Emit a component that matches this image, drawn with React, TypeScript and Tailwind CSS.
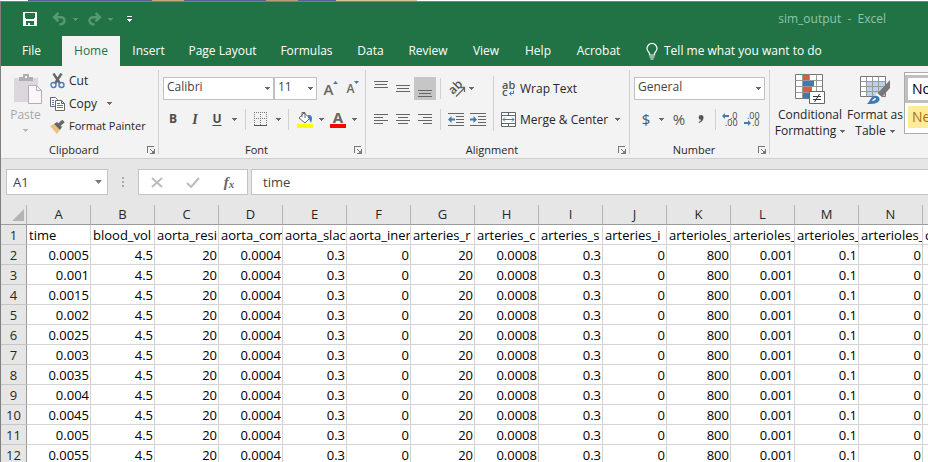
import React from "react";

const UI = "font-['Open_Sans','Noto_Sans',sans-serif]";

function Caret({ className = "text-[#6a6a6a]" }: { className?: string }) {
  return (
    <svg width="5" height="3" viewBox="0 0 5 3" className={`shrink-0 ${className}`} aria-hidden="true" shapeRendering="crispEdges">
      <path d="M0 0h5v1H0zM1 1h3v1H1zM2 2h1v1H2z" fill="currentColor" />
    </svg>
  );
}

function Divider({ className }: { className: string }) {
  return <span className={`w-px shrink-0 bg-[#d0d0d0] ${className}`} />;
}

function IconButton({ label, className, children }: { label: string; className: string; children: React.ReactNode }) {
  return (
    <button type="button" aria-label={label} className={`flex shrink-0 items-center justify-center ${className}`}>
      {children}
    </button>
  );
}

function CaretButton({ label, className = "w-4" }: { label: string; className?: string }) {
  return (
    <IconButton label={label} className={`h-[22px] ${className}`}>
      <Caret />
    </IconButton>
  );
}

function Group({ title, className, launcher = true, children }: { title: string; className: string; launcher?: boolean; children: React.ReactNode }) {
  return (
    <section aria-label={title} className={`flex shrink-0 flex-col ${className}`}>
      <div className="h-[75px]">{children}</div>
      <div className="flex h-[17px] items-center pr-[3px]">
        <h2 className="flex-1 text-center text-[11px] leading-4 text-[#262626]">{title}</h2>
        {launcher && (
          <button type="button" aria-label={`${title} settings`} className="flex size-2 items-center">
            <svg width="8" height="8" viewBox="0 0 8 8" shapeRendering="crispEdges" aria-hidden="true">
              <path d="M0 0h7v1H1v6H0zM3 3h1v1H3zM4 4h1v1H4zM5 5h1v1H5zM7 3h1v5H3V7h4zM5 6h2v1H5zM6 5h1v2H6z" fill="#777" />
            </svg>
          </button>
        )}
      </div>
    </section>
  );
}

function SelectBox({ label, value, options, className }: { label: string; value: string; options: string[]; className: string }) {
  return (
    <div className={`relative h-[23px] shrink-0 ${className}`}>
      <select aria-label={label} defaultValue={value} className="block size-full appearance-none border border-[#c0c0c0] bg-white pb-[3px] pl-[3px] text-[12px] leading-[18px] text-[#444]">
        {options.map((o) => (
          <option key={o}>{o}</option>
        ))}
      </select>
      <span className="pointer-events-none absolute inset-y-0 right-1 flex items-center">
        <Caret />
      </span>
    </div>
  );
}

const tabs: [string, string][] = [
  ["File", "w-[61px]"],
  ["Home", "w-[58px]"],
  ["Insert", "w-[57px]"],
  ["Page Layout", "w-[91px]"],
  ["Formulas", "w-[77px]"],
  ["Data", "w-[51px]"],
  ["Review", "w-[64px]"],
  ["View", "w-[52px]"],
  ["Help", "w-[52px]"],
  ["Acrobat", "w-[69px]"],
];

function TitleBar() {
  return (
    <header className="flex h-[34px] items-center pl-[22px]">
      <IconButton label="Save" className="size-[14px]">
        <svg width="14" height="14" viewBox="0 0 14 14" shapeRendering="crispEdges">
          <path fillRule="evenodd" d="M0 0h14v14H0zM2 1v5h1v1h8v-1h1V1zM3 9v4h2v-2h2v2h4V9z" fill="#fff" />
        </svg>
      </IconButton>
      <IconButton label="Undo" className="ml-[14px] w-4">
        <svg width="15" height="14" viewBox="0 0 15 14" fill="none" stroke="#559a74" strokeWidth="2.4">
          <path d="M6.500 1 2 5.200l4.500 4.200M2 5.200h6.500c5.500 0 5.500 6.500-1 7.300" />
        </svg>
      </IconButton>
      <IconButton label="Undo history" className="w-4">
        <Caret className="text-[#559a74]" />
      </IconButton>
      <IconButton label="Redo" className="ml-[3px] w-4">
        <svg width="15" height="14" viewBox="0 0 15 14" fill="none" stroke="#559a74" strokeWidth="2.4">
          <path d="m8.500 1 4.500 4.200-4.500 4.200M13 5.200H6.500C1 5.200 1 11.700 7.500 12.500" />
        </svg>
      </IconButton>
      <IconButton label="Redo history" className="w-4">
        <Caret className="text-[#559a74]" />
      </IconButton>
      <IconButton label="Customize Quick Access Toolbar" className="ml-[3px] w-4">
        <svg width="5" height="6" viewBox="0 0 5 6" shapeRendering="crispEdges">
          <path d="M0 0h5v1H0zM0 3h5v1H0zM1 4h3v1H1zM2 5h1v1H2z" fill="#fff" />
        </svg>
      </IconButton>
      <h1 className="mr-[42px] ml-auto text-[12px] whitespace-pre text-[#90c5a8]">sim_output  -  Excel</h1>
    </header>
  );
}

function TabBar() {
  return (
    <nav className="flex h-[30px] text-[12px] text-white">
      {tabs.map(([name, width]) => (
        <button key={name} type="button" className={`shrink-0 text-center ${width} ${name === "Home" ? "bg-[#f3f3f3] text-[#217346]" : ""}`}>
          {name}
        </button>
      ))}
      <button type="button" className="ml-[13px] flex shrink-0 items-center gap-[6px] whitespace-nowrap">
        <svg width="12" height="17" viewBox="0 0 12 17" fill="none" stroke="#fff" strokeWidth="1.2">
          <path d="M3.5 12V10.5C3 9 1 8 1 5.5a5 5 0 0 1 10 0C11 8 9 9 8.500 10.500V12zM3.500 14h5M4.500 16h3" />
        </svg>
        Tell me what you want to do
      </button>
    </nav>
  );
}

function ClipboardGroup() {
  return (
    <Group title="Clipboard" className="w-[157px]">
      <div className="flex pt-[3px]">
        <button type="button" className="flex w-[49px] shrink-0 flex-col items-center pt-[5px] text-[12px] leading-5 text-[#a8a8a8]">
          <svg width="28" height="31" viewBox="0 0 28 31" className="ml-1">
            <path d="M0 4h24v24H0z" fill="#dcd7dc" />
            <path d="M5 3h4V0h6v3h4v4H5z" fill="#b1adb1" />
            <path d="M11 2h2v2h-2z" fill="#f3f3f3" />
            <path d="M14.500 11.500h8l5 5v13h-13z" fill="#faf7fa" stroke="#b1adb1" />
            <path d="M22.500 11.500v5h5" fill="none" stroke="#b1adb1" />
          </svg>
          Paste
          <Caret className="mt-1 text-[#b9b5b9]" />
        </button>
        <div className="flex flex-col text-[12px] text-[#262626]">
          <button type="button" className="flex h-[23px] items-center gap-1">
            <svg width="15" height="16" viewBox="0 0 15 16" fill="none">
              <path d="M3.500 0.500 10 10.500M11.500 0.500 5 10.500" stroke="#666" strokeWidth="2.400" />
              <circle cx="3.500" cy="12" r="2.500" stroke="#4a80b8" strokeWidth="1.400" />
              <circle cx="11.500" cy="12" r="2.500" stroke="#4a80b8" strokeWidth="1.400" />
            </svg>
            Cut
          </button>
          <div className="flex h-[23px] items-center">
            <button type="button" className="flex items-center gap-1">
              <svg width="15" height="14" viewBox="0 0 15 14">
                <path d="M.5.5h5l2 2v7h-7z" fill="#fff" stroke="#666" />
                <path d="M5.500 3.500h6l3 3v7h-9z" fill="#fff" stroke="#666" />
                <path d="M11.500 3.500v3h3" fill="none" stroke="#666" />
                <path d="M2 3.500h2M2 5.500h2M2 7.500h2M7 6.500h3M7 8.500h6M7 10.500h6" stroke="#4a80b8" />
              </svg>
              Copy
            </button>
            <CaretButton label="Copy options" className="ml-1 w-4" />
          </div>
          <button type="button" className="flex h-[23px] items-center gap-1 text-[11px] whitespace-nowrap">
            <svg width="15" height="14" viewBox="0 0 15 14">
              <path d="M0 6l4-2 6 6-3 4z" fill="#eec27e" />
              <path d="M4 4l3-2 5 5-2 3z" fill="#666" />
              <path d="m9 5 4.500-4" stroke="#666" strokeWidth="3.500" />
            </svg>
            Format Painter
          </button>
        </div>
      </div>
    </Group>
  );
}

function FontGroup() {
  return (
    <Group title="Font" className="w-[206px]">
      <div className="flex items-center pt-[11px] pl-1">
        <SelectBox label="Font" value="Calibri" options={["Calibri", "Arial", "Cambria"]} className="w-[111px]" />
        <SelectBox label="Font size" value="11" options={["10", "11", "12", "14"]} className="w-[43px]" />
        <IconButton label="Increase font size" className="ml-[5px] h-[23px] w-[18px] font-semibold text-[#666]">
          <span className="text-[15px] leading-5">A</span>
          <svg width="5" height="3" viewBox="0 0 5 3" className="mb-[13px]"><path d="M0 3 2.500 0 5 3z" fill="#3f7ab5" /></svg>
        </IconButton>
        <IconButton label="Decrease font size" className="ml-[5px] h-[23px] w-[16px] font-semibold text-[#666]">
          <span className="text-[12px] leading-5">A</span>
          <svg width="5" height="3" viewBox="0 0 5 3" className="mb-[13px]"><path d="M0 0 2.500 3 5 0z" fill="#3f7ab5" /></svg>
        </IconButton>
      </div>
      <div className="flex items-center pt-2 pl-[3px] text-[12px] text-[#4c4c4c]">
        <IconButton label="Bold" className="h-[22px] w-[22px] font-bold">B</IconButton>
        <IconButton label="Italic" className="h-[22px] w-[22px] font-['Liberation_Serif',serif] text-[14px] font-bold italic">I</IconButton>
        <IconButton label="Underline" className="h-[22px] w-[22px] font-bold underline underline-offset-2">U</IconButton>
        <CaretButton label="Underline options" className="w-[13px]" />
        <Divider className="mx-[4px] h-[21px]" />
        <IconButton label="Borders" className="h-[22px] w-[20px]">
          <svg width="13" height="14" viewBox="0 0 13 14" shapeRendering="crispEdges" stroke="#777" fill="none">
            <path d="M0 .5h13M0 6.500h13M.5 0v13M6.500 0v13M12.500 0v13" strokeDasharray="1 1" />
            <path d="M0 13.500h13" stroke="#555" />
          </svg>
        </IconButton>
        <CaretButton label="Border options" className="w-[16px]" />
        <Divider className="mr-[7px] ml-[2px] h-[21px]" />
        <IconButton label="Fill color" className="h-[22px] w-[17px]">
          <svg width="16" height="17" viewBox="0 0 16 17">
            <path d="M2 7 7 2l6 5-5 5z" fill="#fff" stroke="#666" />
            <path d="M5 6V1.500h3V7" fill="none" stroke="#666" />
            <path d="M11 4c4-.5 5 3 3 8-1-1-1-4-3-5z" fill="#3f7ab5" />
            <path d="M0 13h16v4H0z" fill="#ff0" />
          </svg>
        </IconButton>
        <CaretButton label="Fill color options" />
        <IconButton label="Font color" className="h-[22px] w-[18px]">
          <span className="flex flex-col items-center border-b-4 border-[#f00] px-[3px] text-[15px] leading-[13px] font-bold text-[#666]">A</span>
        </IconButton>
        <CaretButton label="Font color options" className="w-[15px]" />
      </div>
    </Group>
  );
}

function Lines({ rows, label, active }: { rows: [number, number, number][]; label: string; active?: boolean }) {
  return (
    <IconButton label={label} className={`h-[23px] w-[22px] ${active ? "bg-[#c6c6c6]" : ""}`}>
      <svg width="14" height="18" viewBox="0 0 14 18" shapeRendering="crispEdges">
        {rows.map(([x, y, w]) => (
          <rect key={y} x={x} y={y} width={w} height="1" fill="#666" />
        ))}
      </svg>
    </IconButton>
  );
}

function IndentIcon({ flip }: { flip?: boolean }) {
  return (
    <svg width="16" height="13" viewBox="0 0 16 13">
      <path d="M0 .5h16M8 3.500h8M8 6.500h8M8 9.500h8M0 12.500h16" stroke="#666" />
      <path d={flip ? "M7 6.500 3.500 3v2.500H0v2h3.500V10z" : "M0 6.500 3.500 3v2.500H7v2H3.500V10z"} fill="#3f7ab5" />
    </svg>
  );
}

function AlignmentGroup() {
  return (
    <Group title="Alignment" className="w-[263px]">
      <div className="flex pt-[10px] pl-1">
        <div className="flex w-[123px] flex-col gap-2">
          <div className="flex items-center pt-px">
            <Lines label="Top align" rows={[[0, 1, 14], [1, 4, 12], [0, 7, 14]]} />
            <Lines label="Middle align" rows={[[0, 5, 14], [1, 8, 12], [0, 11, 14]]} />
            <Lines label="Bottom align" active rows={[[0, 10, 14], [1, 13, 12], [0, 16, 14]]} />
            <Divider className="mr-[6px] ml-1 h-[21px]" />
            <IconButton label="Orientation" className="h-[23px] w-[18px]">
              <svg width="17" height="16" viewBox="0 0 17 16" className="overflow-visible">
                <text transform="translate(5 14) rotate(-45)" fontSize="12" fontWeight="600" fill="#555">ab</text>
                <path d="M8 15.500 16 7.500M12 6.500h4.500V11" stroke="#666" strokeWidth="1.300" fill="none" />
              </svg>
            </IconButton>
            <CaretButton label="Orientation options" className="w-[12px]" />
          </div>
          <div className="flex items-center">
            <Lines label="Align left" rows={[[0, 3, 14], [0, 6, 9], [0, 9, 14], [0, 12, 9]]} />
            <Lines label="Center" rows={[[0, 3, 14], [2, 6, 10], [0, 9, 14], [2, 12, 10]]} />
            <Lines label="Align right" rows={[[0, 3, 14], [5, 6, 9], [0, 9, 14], [5, 12, 9]]} />
            <Divider className="mr-[6px] ml-1 h-[21px]" />
            <IconButton label="Decrease indent" className="h-[22px] w-[18px]">
              <IndentIcon />
            </IconButton>
            <IconButton label="Increase indent" className="ml-1 h-[22px] w-[18px]">
              <IndentIcon flip />
            </IconButton>
          </div>
        </div>
        <Divider className="h-[55px]" />
        <div className="flex flex-col gap-[6px] pl-[7px] text-[12px] text-[#262626]">
          <button type="button" className="flex h-[26px] items-center gap-1 whitespace-nowrap">
            <svg width="15" height="17" viewBox="0 0 15 17" className="overflow-visible">
              <text x="1" y="8" fontSize="11" fontWeight="600" fill="#555">ab</text>
              <text x="1" y="15" fontSize="11" fontWeight="600" fill="#555">c</text>
              <path d="M12.500 9.500v3H8.500M10.500 10.500l-2 2 2 2" stroke="#3f7ab5" fill="none" />
            </svg>
            Wrap Text
          </button>
          <div className="flex h-[23px] items-center">
            <button type="button" className="flex items-center gap-1 whitespace-nowrap">
              <svg width="15" height="15" viewBox="0 0 15 15">
                <path d="M.5.5h14v14H.5zM.5 3.500h14M.5 11.500h14M7.500.5v3M7.500 11.500v3" fill="#fff" stroke="#666" />
                <path d="M2 7.500h11M4 5.500l-2 2 2 2M11 5.500l2 2-2 2" stroke="#3f7ab5" fill="none" />
              </svg>
              Merge &amp; Center
            </button>
            <CaretButton label="Merge options" className="ml-px w-4" />
          </div>
        </div>
      </div>
    </Group>
  );
}

function DecimalIcon({ increase }: { increase?: boolean }) {
  return (
    <svg width="16" height="15" viewBox="0 0 16 15" fontSize="9" fill="#444" className="overflow-visible">
      <text x={increase ? 8 : 3} y="7">{increase ? ".0" : ".00"}</text>
      <text x={increase ? 3 : 8} y="14">{increase ? ".00" : ".0"}</text>
      {increase ? (
        <path d="M0 4 3 1v2h4v2H3v2z" fill="#3f7ab5" />
      ) : (
        <path d="M7 11 4 8v2H0v2h4v2z" fill="#3f7ab5" />
      )}
    </svg>
  );
}

function NumberGroup() {
  return (
    <Group title="Number" className="w-[139px]">
      <div className="pt-[11px] pl-1">
        <SelectBox label="Number format" value="General" options={["General", "Number", "Currency"]} className="w-[131px]" />
      </div>
      <div className="flex items-center pt-2 pl-[6px] text-[15px] text-[#555]">
        <IconButton label="Accounting format" className="h-[22px] w-5">$</IconButton>
        <CaretButton label="Accounting options" className="w-[11px]" />
        <IconButton label="Percent style" className="h-[22px] w-6">%</IconButton>
        <IconButton label="Comma style" className="h-[22px] w-5">
          <svg width="6" height="8" viewBox="0 0 6 8">
            <path d="M3 0a2.500 2.500 0 0 1 2.500 2.500C5.500 5 4 7 1 8L.5 7C2 6.500 3 5.500 3 4.800A2.400 2.400 0 1 1 3 0z" fill="#555" />
          </svg>
        </IconButton>
        <Divider className="mx-[4px] h-[21px]" />
        <IconButton label="Increase decimal" className="h-[22px] w-5"><DecimalIcon increase /></IconButton>
        <IconButton label="Decrease decimal" className="ml-[2px] h-[22px] w-5"><DecimalIcon /></IconButton>
      </div>
    </Group>
  );
}

function StylesGroup() {
  return (
    <section aria-label="Styles" className="flex min-w-0 flex-1 overflow-hidden text-[12px] leading-4 text-[#262626]">
      <button type="button" className="flex w-[80px] shrink-0 flex-col items-center pt-2">
        <svg width="30" height="31" viewBox="0 0 30 31">
          <path d="M.5.5h27v24H.5z" fill="#fff" stroke="#777" />
          <path d="M.5 6.500h27M.5 12.500h27M.5 18.500h27M7.500.5v24M14.500.5v24M21.500.5v24" stroke="#999" />
          <path d="M8 1h6v5H8zM8 13h9v5H8z" fill="#d65f41" />
          <path d="M8 7h11v5H8zM8 19h6v5H8z" fill="#3f7ab5" />
          <path d="M14.500 17.500h15v12h-15z" fill="#fff" stroke="#666" />
          <path d="M18 22.500h8M18 25.500h8M24.500 20l-5 8" stroke="#333" fill="none" />
        </svg>
        <span className="mt-[2px]">Conditional</span>
        <span className="flex items-center gap-1">Formatting <Caret /></span>
      </button>
      <button type="button" className="flex w-[50px] shrink-0 flex-col items-center pt-2 whitespace-nowrap">
        <svg width="30" height="31" viewBox="0 0 30 31">
          <path d="M.5 2.500h25v20H.5z" fill="#fff" stroke="#777" />
          <path d="M7 8h18v14H7z" fill="#bdd2ea" />
          <path d="M.5 7.500h25M.5 12.500h25M.5 17.500h25M6.500 2.500v20M12.500 2.500v20M18.500 2.500v20" stroke="#999" />
          <path d="M30 6v8l-9 10-4-4z" fill="#777" />
          <path d="m17 19 5 4-3 3-4-4z" fill="#fff" />
          <path d="M14 22c4-1 7 2 5 5-2 3-7 3-12 3 3-2 3-7 7-8z" fill="#3f7ab5" />
          <path d="M16 24c-2 0-3 1-4 3 2 0 4-1 4-3z" fill="#fff" />
        </svg>
        <span className="mt-[2px]">Format as</span>
        <span className="flex items-center gap-1">Table <Caret /></span>
      </button>
      <div className="mt-[6px] ml-1 flex h-[62px] min-w-0 flex-1 flex-col gap-[3px] overflow-hidden border border-r-0 border-[#ababab] bg-white pt-[2px] text-[14px]">
        <button type="button" className="h-[28px] w-[76px] shrink-0 border-[3px] border-[#c0c0c0] bg-white pl-1 text-left text-black">Normal</button>
        <button type="button" className="ml-[3px] h-[22px] w-[70px] shrink-0 bg-[#ffeb9c] pl-1 text-left text-[#b0700c]">Neutral</button>
      </div>
    </section>
  );
}

function FormulaBar() {
  return (
    <div className="flex h-[47px] shrink-0 items-start border-t border-[#cfcfcf] pt-[10px] pl-[5px] text-[13px] text-[#444]">
      <div className="relative h-[26px] w-[102px] shrink-0">
        <input aria-label="Name box" defaultValue="A1" className="size-full border border-[#c3c3c3] bg-white pl-[6px]" />
        <span className="pointer-events-none absolute inset-y-0 right-[6px] flex items-center">
          <svg width="7" height="4" viewBox="0 0 7 4"><path d="M0 0h7L3.500 4z" fill="#777" /></svg>
        </span>
      </div>
      <span className="flex h-[26px] w-[30px] shrink-0 flex-col items-center justify-center gap-[2px]">
        {[0, 1, 2].map((i) => (
          <span key={i} className="size-[2px] bg-[#a8a8a8]" />
        ))}
      </span>
      <div className="flex h-[26px] w-[110px] shrink-0 items-center border border-[#c3c3c3] bg-white">
        <IconButton label="Cancel" className="h-full w-9">
          <svg width="12" height="11" viewBox="0 0 12 11"><path d="m1 1 10 9M11 1 1 10" stroke="#bcbcbc" strokeWidth="2" /></svg>
        </IconButton>
        <IconButton label="Enter" className="h-full w-9">
          <svg width="14" height="11" viewBox="0 0 14 11"><path d="m1 6 4 4L13 1" fill="none" stroke="#bcbcbc" strokeWidth="2" /></svg>
        </IconButton>
        <IconButton label="Insert function" className="h-full w-9 font-['Liberation_Serif',serif] text-[#666] italic">
          <span className="text-[15px] leading-5 font-bold">f</span>
          <span className="pt-1 text-[11px] leading-4 font-bold">x</span>
        </IconButton>
      </div>
      <input aria-label="Formula bar" defaultValue="time" className="ml-[3px] h-[26px] min-w-0 flex-1 border border-r-0 border-[#c3c3c3] bg-white pl-[11px]" />
    </div>
  );
}

const columns = "ABCDEFGHIJKLMNO".split("");

const names = [
  "time", "blood_vol", "aorta_resi", "aorta_com", "aorta_slac", "aorta_iner",
  "arteries_r", "arteries_c", "arteries_s", "arteries_i",
  "arterioles_", "arterioles_", "arterioles_", "arterioles_", "c",
];

const times = ["0.0005", "0.001", "0.0015", "0.002", "0.0025", "0.003", "0.0035", "0.004", "0.0045", "0.005", "0.0055"];

const constants = ["4.5", "20", "0.0004", "0.3", "0", "20", "0.0008", "0.3", "0", "800", "0.001", "0.1", "0", ""];

const rowHead = "h-5 border-r border-b border-[#c6c6c6] border-r-[#9b9b9b] bg-[#e6e6e6] px-0 pt-[2px] pb-0 text-center font-normal text-[#262626]";
const cell = "h-5 overflow-hidden border-r border-b border-[#d4d4d4] pt-[2px] pr-px pb-0 pl-[2px] whitespace-nowrap";

function Sheet() {
  return (
    <main className="min-h-0 flex-1 overflow-hidden bg-white">
      <table className="w-[986px] table-fixed border-separate border-spacing-0 text-[13px] leading-[17px] text-black">
        <colgroup>
          <col className="w-[26px]" />
          {columns.map((c) => (
            <col key={c} className="w-16" />
          ))}
        </colgroup>
        <thead>
          <tr className="bg-[#e6e6e6] text-[#262626]">
            <th aria-label="Select all" className="h-5 border-r border-b border-[#9b9b9b] border-r-[#b5b5b5] p-0">
              <svg width="12" height="12" viewBox="0 0 12 12" className="mr-[2px] ml-auto"><path d="M12 0v12H0z" fill="#b4b4b4" /></svg>
            </th>
            {columns.map((c) => (
              <th key={c} scope="col" className="h-5 border-r border-b border-[#9b9b9b] border-r-[#b5b5b5] p-0 font-normal">{c}</th>
            ))}
          </tr>
        </thead>
        <tbody>
          <tr>
            <th scope="row" className={rowHead}>1</th>
            {names.map((n, i) => (
              <td key={i} className={cell}>{n}</td>
            ))}
          </tr>
          {times.map((t, i) => (
            <tr key={t}>
              <th scope="row" className={rowHead}>{i + 2}</th>
              {[t, ...constants].map((v, j) => (
                <td key={j} className={`text-right ${cell}`}>{v}</td>
              ))}
            </tr>
          ))}
        </tbody>
      </table>
    </main>
  );
}

export default function App() {
  return (
    <div className={`flex h-screen flex-col overflow-hidden bg-[#e6e6e6] ${UI}`}>
      <div className="flex h-px shrink-0 bg-white">
        <span className="ml-7 w-[124px] bg-[#5a5f96]" />
        <span className="w-8 bg-[#c4a780]" />
        <span className="w-[82px] bg-[#5a5f96]" />
        <span className="w-8 bg-[#b99a78]" />
        <span className="w-[38px] bg-[#5a5f96]" />
        <span className="w-[81px] bg-[#d9c49a]" />
      </div>
      <div className="flex min-h-0 flex-1 flex-col border-t border-l border-[#7f7f7f]">
        <div className="shrink-0 bg-[#217346]">
          <TitleBar />
          <TabBar />
        </div>
        <div className="flex h-[92px] shrink-0 bg-[#f3f3f3]">
          <ClipboardGroup />
          <Divider className="mt-1 h-[84px]" />
          <FontGroup />
          <Divider className="mt-1 h-[84px]" />
          <AlignmentGroup />
          <Divider className="mt-1 h-[84px]" />
          <NumberGroup />
          <Divider className="mt-1 h-[84px]" />
          <StylesGroup />
        </div>
        <FormulaBar />
        <Sheet />
      </div>
    </div>
  );
}
